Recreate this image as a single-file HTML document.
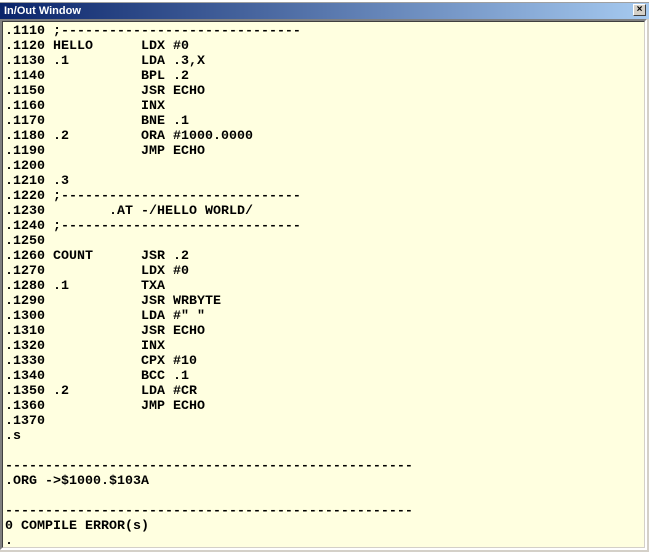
<!DOCTYPE html><html><head><style>
body{margin:0;width:649px;height:552px;background:#d4d0c8;position:relative;overflow:hidden}
.top{position:absolute;left:0;top:0;width:649px;height:3px;background:#fff;border-bottom:1px solid #a0a0a0;box-sizing:border-box}
.title{position:absolute;left:0;top:3px;width:649px;height:16px;background:linear-gradient(90deg,#0a246a,#a6caf0);color:#fff;font:bold 11px "Liberation Sans",sans-serif;line-height:16px;padding-left:4px;box-sizing:border-box}
.close{position:absolute;left:633px;top:4px;width:13px;height:12px;background:#d4d0c8;border:1px solid;border-color:#fff #404040 #404040 #fff;box-sizing:border-box;font:bold 10px "Liberation Sans",sans-serif;color:#000;text-align:center;line-height:10px}
.content{position:absolute;left:0;top:19px;width:647px;height:531px;background:#ffffe0;border:2px solid;border-color:#808080 #fff #fff #808080;box-sizing:border-box}
.content:before{content:"";position:absolute;inset:0;border:1px solid;border-color:#404040 #d4d0c8 #d4d0c8 #404040}
pre{margin:0;position:absolute;left:3px;top:3px;font:bold 13.33px "Liberation Mono",monospace;line-height:15px;color:#000}
</style></head><body>
<div class="top"></div>
<div class="title">In/Out Window</div>
<div class="close">×</div>
<div class="content"><pre>.1110 ;------------------------------
.1120 HELLO      LDX #0
.1130 .1         LDA .3,X
.1140            BPL .2
.1150            JSR ECHO
.1160            INX
.1170            BNE .1
.1180 .2         ORA #1000.0000
.1190            JMP ECHO
.1200
.1210 .3
.1220 ;------------------------------
.1230        .AT -/HELLO WORLD/
.1240 ;------------------------------
.1250
.1260 COUNT      JSR .2
.1270            LDX #0
.1280 .1         TXA
.1290            JSR WRBYTE
.1300            LDA #" "
.1310            JSR ECHO
.1320            INX
.1330            CPX #10
.1340            BCC .1
.1350 .2         LDA #CR
.1360            JMP ECHO
.1370
.s

---------------------------------------------------
.ORG ->$1000.$103A

---------------------------------------------------
0 COMPILE ERROR(s)
.</pre></div>
</body></html>
